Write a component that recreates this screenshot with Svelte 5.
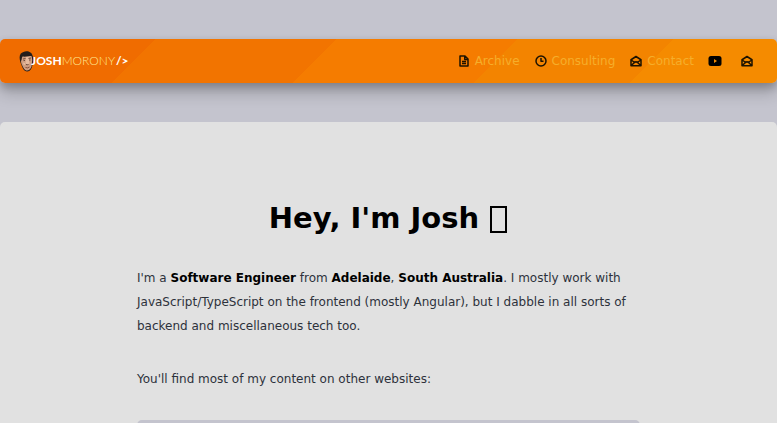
<script lang="ts">
  type Icon = "document" | "clock" | "mail" | "youtube";

  type NavItem = {
    href: string;
    icon: Icon;
    label: string;
    iconOnly?: boolean;
  };

  const navItems: NavItem[] = [
    { href: "/archive", icon: "document", label: "Archive" },
    { href: "/consulting", icon: "clock", label: "Consulting" },
    { href: "/contact", icon: "mail", label: "Contact" },
    { href: "/youtube", icon: "youtube", label: "YouTube", iconOnly: true },
    { href: "/newsletter", icon: "mail", label: "Newsletter", iconOnly: true },
  ];
</script>

{#snippet navIcon(icon: Icon)}
  <svg class="icon" viewBox="0 0 24 24" aria-hidden="true">
    {#if icon === "document"}
      <path d="M4 2h10l6 6v14H4zM13.5 3v6H20M8 13h8M8 17h8" />
    {:else if icon === "clock"}
      <circle cx="12" cy="12" r="10" />
      <path d="M12 6v6.500h5" />
    {:else if icon === "mail"}
      <path d="M2 9.500 12 3l10 6.500v12H2zM3 10.500l6.500 4.500M21 10.500l-6.500 4.500M3 20.500l6-5.500q3-2.500 6 0l6 5.500" />
    {:else}
      <rect class="solid" x="-1" y="2" width="26" height="20" rx="5" />
      <path class="play" d="m10 8 6 4-6 4z" />
    {/if}
  </svg>
{/snippet}

<header class="site-header">
  <a class="logo" href="/">
    <svg class="face" viewBox="0 0 30 42" aria-hidden="true">
      <path
        fill="#241d1b"
        d="M3 23C-1 10 2 4 9 2c7-4 17 0 18 7 2 4 2 9 1 13l-2 10c-2 6-6 9-10 9-5 0-8-5-10-10z"
      />
      <path
        fill="#cf9d80"
        d="M4 20c2-2 1-7 3-9 6 1 13-1 18-1 1 4 2 8 1 12l-1 9c-2 5-5 8-9 8-5 0-7-5-9-9-1-3-3-5-3-10z"
      />
      <path fill="#e6bb9f" d="M14 12h5l2 13-4 2-4-2zM8 23l4 1v4l-3-1z" />
      <path
        fill="none"
        stroke="#4a3029"
        stroke-width="1.5"
        d="M8 16l5-1M19 15l5-1M9 19h3M20 18h3M14 27q3 1 5 0"
      />
      <path fill="none" stroke="#84503f" stroke-width="2" d="M13 33q4 2 8-1" />
    </svg>
    <span class="wordmark">
      <b>JOSH</b><span class="surname">MORONY</span><b class="tag">/&gt;</b>
    </span>
  </a>
  <nav aria-label="Main">
    {#each navItems as item}
      <a href={item.href} aria-label={item.iconOnly ? item.label : undefined}>
        {@render navIcon(item.icon)}
        <span>{item.iconOnly ? "" : item.label}</span>
      </a>
    {/each}
  </nav>
</header>

<main class="page">
  <article>
    <h1>Hey, I'm Josh <span class="wave" role="img" aria-label="Wave"></span></h1>
    <p>
      I'm a <strong>Software Engineer</strong> from <strong>Adelaide</strong>,
      <strong>South Australia</strong>. I mostly work with JavaScript/TypeScript
      on the frontend (mostly Angular), but I dabble in all sorts of backend and
      miscellaneous tech too.
    </p>
    <p>You'll find most of my content on other websites:</p>
    <div class="panel"></div>
  </article>
</main>

<style>
  :global(body) {
    background: #c4c4ce;
    color: #2d313b;
    font-family: "DejaVu Sans", sans-serif;
    font-size: 12px;
  }

  :global(html) {
    scrollbar-width: none;
  }

  .site-header {
    display: flex;
    align-items: center;
    justify-content: space-between;
    box-sizing: border-box;
    min-height: 44px;
    margin: 39px 0;
    padding: 0 19px;
    border-radius: 5px;
    background: linear-gradient(
      135deg,
      #f06c00 19%,
      #f27400 19% 41%,
      #f57c00 41% 63%,
      #f38400 63% 82%,
      #f58b00 82%
    );
    box-shadow:
      0 10px 16px rgb(0 0 0 / 20%),
      0 4px 8px rgb(0 0 0 / 20%);
  }

  a {
    color: inherit;
    text-decoration: none;
  }

  .logo {
    display: flex;
    align-items: center;
  }

  .face {
    width: 15px;
    height: 21px;
  }

  .wordmark {
    margin-left: -3px;
    color: #fff;
    font-family: Lato, sans-serif;
    font-size: 12px;
    line-height: 20px;
  }

  .surname {
    color: #ffe891;
    font-weight: 300;
  }

  .tag {
    margin-left: 1px;
  }

  nav {
    display: flex;
    align-items: center;
    gap: 15px;
  }

  nav a {
    display: flex;
    align-items: center;
    gap: 5px;
    color: #f6ae2b;
  }

  nav a:hover {
    color: #fff;
  }

  .icon {
    width: 12px;
    height: 12px;
    overflow: visible;
    fill: none;
    stroke: #1d1300;
    stroke-width: 3;
    stroke-linejoin: round;
  }

  .icon .solid {
    fill: #000;
    stroke: none;
  }

  .icon .play {
    fill: #f58b00;
    stroke: none;
  }

  .page {
    padding: 77px 137px 39px;
    border-radius: 5px;
    background: #e1e1e1;
  }

  article {
    max-width: 503px;
    margin: 0 auto;
  }

  h1 {
    margin: 0 0 29px;
    color: #000;
    font-size: 29px;
    line-height: 38px;
    text-align: center;
  }

  .wave {
    display: inline-block;
    box-sizing: border-box;
    width: 17px;
    height: 27px;
    margin: 0 1px;
    border: 2px solid #000;
    vertical-align: -5px;
  }

  p {
    margin: 0 0 29px;
    line-height: 24px;
  }

  strong {
    color: #000;
  }

  .panel {
    min-height: 120px;
    border-radius: 5px;
    background: #c4c4ce;
  }

  @media (max-width: 640px) {
    .page {
      padding: 48px 24px;
    }

    .site-header {
      flex-wrap: wrap;
    }
  }
</style>
